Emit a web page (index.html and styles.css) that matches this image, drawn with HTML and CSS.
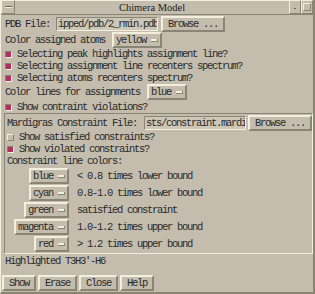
FILE: index.html
```html
<!DOCTYPE html>
<html>
<head>
<meta charset="utf-8">
<link rel="stylesheet" href="styles.css">
</head>
<body>
<div class="win">
  <div class="titlebar">
    <div class="tb-menu"><span class="tb-dash"></span></div>
    <div class="tb-title">Chimera Model</div>
    <div class="tb-min"><span class="tb-dot"></span></div>
    <div class="tb-max"><span class="tb-sq"></span></div>
  </div>
  <div class="content">
    <div class="row r-file">
      <span class="lbl">PDB File:</span>
      <div class="entry">ipped/pdb/2_rmin.pdb</div>
      <div class="btn">Browse ...</div>
    </div>
    <div class="row r-opt">
      <span class="lbl">Color assigned atoms</span>
      <div class="mb">yellow<i class="ind"></i></div>
    </div>
    <div class="check on"><i class="box"></i>Selecting peak highlights assignment line?</div>
    <div class="check on"><i class="box"></i>Selecting assignment line recenters spectrum?</div>
    <div class="check on"><i class="box"></i>Selecting atoms recenters spectrum?</div>
    <div class="row r-opt">
      <span class="lbl">Color lines for assignments</span>
      <div class="mb">blue<i class="ind"></i></div>
    </div>
    <div class="check on r-viol"><i class="box"></i>Show contraint violations?</div>

    <div class="frame">
      <div class="row r-file r-mard">
        <span class="lbl">Mardigras Constraint File:</span>
        <div class="entry">sts/constraint.mardi</div>
        <div class="btn">Browse ...</div>
      </div>
      <div class="check"><i class="box"></i>Show satisfied constraints?</div>
      <div class="check on"><i class="box"></i>Show violated constraints?</div>
      <div class="text-row">Constraint line colors:</div>
      <div class="legend">
        <div class="lg-row"><div class="lg-cell"><div class="mb">blue<i class="ind"></i></div></div><span class="lg-txt">&lt; 0.8 times lower bound</span></div>
        <div class="lg-row"><div class="lg-cell"><div class="mb">cyan<i class="ind"></i></div></div><span class="lg-txt">0.8-1.0 times lower bound</span></div>
        <div class="lg-row"><div class="lg-cell"><div class="mb">green<i class="ind"></i></div></div><span class="lg-txt">satisfied constraint</span></div>
        <div class="lg-row"><div class="lg-cell"><div class="mb">magenta<i class="ind"></i></div></div><span class="lg-txt">1.0-1.2 times upper bound</span></div>
        <div class="lg-row"><div class="lg-cell"><div class="mb">red<i class="ind"></i></div></div><span class="lg-txt">&gt; 1.2 times upper bound</span></div>
      </div>
    </div>

    <div class="status">Highlighted T3H3'-H6</div>
  </div>
  <div class="buttons">
    <div class="btn">Show</div>
    <div class="btn">Erase</div>
    <div class="btn">Close</div>
    <div class="btn">Help</div>
  </div>
</div>
</body>
</html>
```
FILE: styles.css
```css
:root {
  --bg: #c4bdad;
  --lt: #f3efdf;
  --dk: #8a8475;
  --dk2: #6a6558;
}
* { box-sizing: border-box; }
html, body { margin: 0; padding: 0; background: var(--bg); }
body {
  font-family: "Liberation Mono", monospace;
  font-size: 10.5px;
  letter-spacing: -1.3px;
  color: #2a2a2a;
}
.win {
  width: 315px;
  height: 294px;
  background: var(--bg);
  border-left: 1px solid var(--lt);
  border-right: 2px solid var(--dk);
  border-bottom: 2px solid var(--dk);
  display: flex;
  flex-direction: column;
  overflow: hidden;
}
.titlebar {
  height: 15px;
  display: flex;
  border-bottom: 1px solid var(--dk);
  flex: none;
}
.tb-menu {
  width: 14px;
  border: 1px solid;
  border-color: var(--lt) var(--dk) var(--dk) var(--lt);
  display: flex;
  align-items: center;
  justify-content: center;
}
.tb-dash { width: 7px; height: 1px; background: var(--dk2); border-bottom: 1px solid var(--lt); box-sizing: content-box; }
.tb-title {
  flex: 1;
  text-align: center;
  font-family: "Liberation Serif", serif;
  font-size: 10.5px;
  letter-spacing: 0;
  line-height: 14px;
  color: #222;
  border-top: 1px solid var(--lt);
}
.tb-min {
  width: 12px;
  border: 1px solid;
  border-color: var(--lt) var(--dk) var(--dk) var(--lt);
  position: relative;
}
.tb-dot { position: absolute; left: 4px; top: 7px; width: 2px; height: 1px; background: var(--dk2); }
.tb-max {
  width: 12px;
  border: 1px solid;
  border-color: var(--lt) var(--dk) var(--dk) var(--lt);
  display: flex;
  align-items: center;
  justify-content: center;
}
.tb-sq { width: 8px; height: 8px; border: 1px solid; border-color: var(--lt) var(--dk) var(--dk) var(--lt); }

.content { padding-left: 3px; flex: none; }
.row { display: flex; align-items: center; height: 16px; padding-left: 1px; }
.r-file { margin-top: 1px; }
.lbl { white-space: pre; }
.entry {
  width: 102px;
  height: 14px;
  margin-left: 6px;
  border: 1px solid;
  border-color: var(--dk) var(--lt) var(--lt) var(--dk);
  background: #cdc7b8;
  overflow: hidden;
  white-space: nowrap;
  padding-left: 1px;
  line-height: 12px;
}
.btn {
  height: 16px;
  border: 2px solid;
  border-color: var(--lt) var(--dk) var(--dk) var(--lt);
  padding: 0 5px;
  line-height: 12px;
  white-space: nowrap;
  margin-left: 3px;
}
.mb {
  height: 16px;
  border: 2px solid;
  border-color: var(--lt) var(--dk) var(--dk) var(--lt);
  padding: 0 2px;
  line-height: 12px;
  display: flex;
  align-items: center;
  white-space: nowrap;
}
.r-opt .mb { margin-left: 7px; }
.ind {
  flex: none;
  width: 7px;
  height: 3px;
  margin-left: 5px;
  background: var(--lt);
  border-bottom: 1px solid var(--dk);
  border-right: 1px solid var(--dk);
}
.check {
  display: flex;
  align-items: center;
  height: 12px;
  padding-left: 1px;
  white-space: nowrap;
}
.box {
  flex: none;
  width: 7px;
  height: 7px;
  margin-right: 5px;
  border: 1px solid;
  border-color: var(--lt) var(--dk) var(--dk) var(--lt);
  background: var(--bg);
}
.check.on .box {
  border-color: var(--dk) var(--lt) var(--lt) var(--dk);
  background: #b03060;
}
.r-viol { margin-top: 1px; }
.frame {
  width: 309px;
  border: 1px solid;
  border-color: var(--dk) var(--lt) var(--lt) var(--dk);
  padding-left: 1px;
}
.r-mard .entry { margin-left: 7px; }
.r-mard .btn { margin-left: 2px; }
.text-row { height: 12px; line-height: 12px; padding-left: 1px; }
.legend {
  display: flex;
  flex-direction: column;
  gap: 1px;
  margin-top: 1px;
  padding-bottom: 1px;
}
.lg-row { display: flex; align-items: center; height: 16px; }
.lg-cell { width: 63px; flex: none; display: flex; justify-content: flex-end; }
.lg-txt { margin-left: 8px; white-space: nowrap; }
.status { height: 14px; line-height: 14px; padding-left: 1px; }
.buttons {
  display: flex;
  padding-left: 1px;
  margin-top: 7px;
  gap: 2px;
}
.buttons .btn { margin-left: 0; padding: 0 5px; height: 16px; }
```
